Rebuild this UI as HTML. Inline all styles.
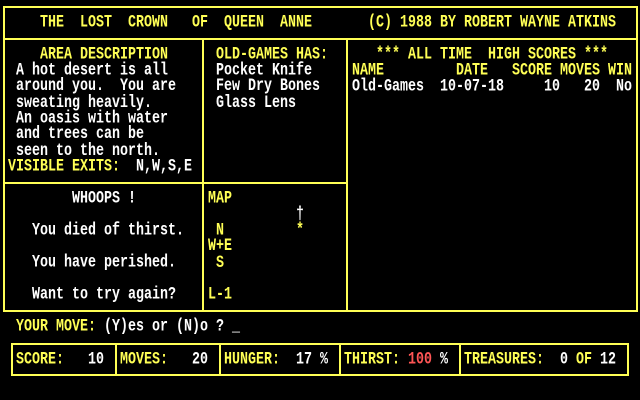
<!DOCTYPE html>
<html><head><style>
body{margin:0;background:#000;width:640px;height:400px;overflow:hidden;position:relative;font-family:"Liberation Mono","DejaVu Sans Mono",monospace;font-size:13.33px;font-weight:bold}
.t{position:absolute;white-space:pre;line-height:12.3077px;transform:scaleY(1.3);transform-origin:0 0;margin-top:2px}
.y{color:#ffff55}.w{color:#fff}.r{color:#ff5555}
.b{position:absolute;border:2px solid #ffff55;box-sizing:border-box}
.h{position:absolute;background:#ffff55}
</style></head><body>
<div class="b" style="left:3px;top:6px;width:635px;height:306px"></div>
<div class="h" style="left:3px;top:38px;width:635px;height:2px"></div>
<div class="h" style="left:202px;top:38px;width:2px;height:274px"></div>
<div class="h" style="left:346px;top:38px;width:2px;height:274px"></div>
<div class="h" style="left:3px;top:182px;width:345px;height:2px"></div>

<div class="t y" style="left:40px;top:14px">THE  LOST  CROWN   OF  QUEEN  ANNE</div>
<div class="t y" style="left:368px;top:14px">(C) 1988 BY ROBERT WAYNE ATKINS</div>

<div class="t y" style="left:40px;top:46px">AREA DESCRIPTION</div>
<div class="t w" style="left:16px;top:62px">A hot desert is all
around you.  You are
sweating heavily.
An oasis with water
and trees can be
seen to the north.</div>
<div class="t" style="left:8px;top:158px"><span class="y">VISIBLE EXITS:</span><span class="w">  N,W,S,E</span></div>

<div class="t y" style="left:216px;top:46px">OLD-GAMES HAS:</div>
<div class="t w" style="left:216px;top:62px">Pocket Knife
Few Dry Bones
Glass Lens</div>

<div class="t y" style="left:376px;top:46px">*** ALL TIME  HIGH SCORES ***</div>
<div class="t y" style="left:352px;top:62px">NAME         DATE   SCORE MOVES WIN</div>
<div class="t w" style="left:352px;top:78px">Old-Games  10-07-18     10   20  No</div>

<div class="t w" style="left:72px;top:190px">WHOOPS !</div>
<div class="t w" style="left:32px;top:222px">You died of thirst.</div>
<div class="t w" style="left:32px;top:254px">You have perished.</div>
<div class="t w" style="left:32px;top:286px">Want to try again?</div>

<div class="t y" style="left:208px;top:190px">MAP</div>
<div class="t y" style="left:208px;top:222px"> N
W+E
 S</div>
<div class="t y" style="left:208px;top:286px">L-1</div>
<div class="t w" style="left:296px;top:206px">&#8224;</div>
<div class="t y" style="left:296px;top:222px">*</div>

<div class="t" style="left:16px;top:318px"><span class="y">YOUR MOVE:</span><span class="w"> (Y)es or (N)o ? _</span></div>

<div class="b" style="left:11px;top:343px;width:618px;height:33px"></div>
<div class="h" style="left:115px;top:343px;width:2px;height:33px"></div>
<div class="h" style="left:219px;top:343px;width:2px;height:33px"></div>
<div class="h" style="left:339px;top:343px;width:2px;height:33px"></div>
<div class="h" style="left:459px;top:343px;width:2px;height:33px"></div>
<div class="t" style="left:16px;top:351px"><span class="y">SCORE:</span><span class="w">   10</span></div>
<div class="t" style="left:120px;top:351px"><span class="y">MOVES:</span><span class="w">   20</span></div>
<div class="t" style="left:224px;top:351px"><span class="y">HUNGER:</span><span class="w">  17 %</span></div>
<div class="t" style="left:344px;top:351px"><span class="y">THIRST:</span> <span class="r">100</span><span class="w"> %</span></div>
<div class="t" style="left:464px;top:351px"><span class="y">TREASURES:</span><span class="w">  0 </span><span class="y">OF</span><span class="w"> 12</span></div>
</body></html>
